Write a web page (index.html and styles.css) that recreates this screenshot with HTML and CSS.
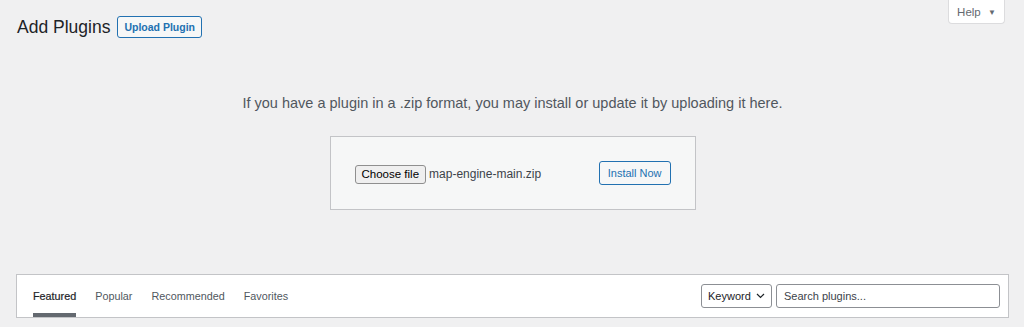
FILE: index.html
```html
<!DOCTYPE html>
<html lang="en">

<head>
  <meta charset="UTF-8" />
  <meta name="viewport" content="width=device-width, initial-scale=1.0" />
  <title>Add Plugins</title>
  <link rel="stylesheet" href="styles.css">
</head>

<body>
  <div class="page">
    <div class="top-row">
      <div class="title-group">
        <h1 class="page-title">Add Plugins</h1>
        <a class="btn-outline title-action" href="#">Upload Plugin</a>
      </div>
      <button class="help-tab">Help <span class="help-arrow">&#9660;</span></button>
    </div>

    <p class="upload-note">If you have a plugin in a .zip format, you may install or update it by uploading it here.</p>

    <form class="upload-box">
      <div class="file-field">
        <button type="button" class="file-btn">Choose file</button>
        <span class="file-name">map-engine-main.zip</span>
      </div>
      <button type="button" class="btn-outline install-btn">Install Now</button>
    </form>

    <div class="filter-bar">
      <ul class="filter-links">
        <li><a class="filter-link current" href="#">Featured</a></li>
        <li><a class="filter-link" href="#">Popular</a></li>
        <li><a class="filter-link" href="#">Recommended</a></li>
        <li><a class="filter-link" href="#">Favorites</a></li>
      </ul>
      <div class="search-form">
        <div class="select-box">Keyword
          <svg class="chevron" width="9" height="6" viewBox="0 0 9 6"><path d="M1 1l3.5 3.5L8 1" fill="none" stroke="#1d2327" stroke-width="1.2"/></svg>
        </div>
        <input class="search-input" type="search" placeholder="Search plugins...">
      </div>
    </div>
  </div>
</body>

</html>
```

FILE: styles.css
```css
:root {
  --color-bg: #f0f0f1;
  --color-text: #1d2327;
  --color-muted: #50575e;
  --color-border: #c3c4c7;
  --color-input-border: #8c8f94;
  --color-link: #2271b1;
  --font-base: "Liberation Sans", Arial, sans-serif;
}

* {
  box-sizing: border-box;
  margin: 0;
  padding: 0;
}

body {
  font-family: var(--font-base);
  background-color: var(--color-bg);
  color: var(--color-text);
  -webkit-font-smoothing: antialiased;
}

.page {
  padding: 0 15px 0 16px;
}

.top-row {
  display: flex;
  justify-content: space-between;
  align-items: flex-start;
}

.title-group {
  display: flex;
  align-items: center;
  gap: 7px;
  margin-top: 16px;
  margin-left: 1px;
}

.page-title {
  font-size: 17.5px;
  font-weight: 400;
  line-height: 22px;
}

.btn-outline {
  display: inline-block;
  border: 1px solid var(--color-link);
  border-radius: 3px;
  background-color: #f6f7f7;
  color: var(--color-link);
  font-family: inherit;
  text-decoration: none;
  cursor: pointer;
}

.title-action {
  font-size: 10.5px;
  font-weight: 700;
  line-height: 20px;
  padding: 0 6px;
}

.help-tab {
  width: 57px;
  height: 24px;
  margin-right: 4px;
  border: 1px solid #dcdcde;
  border-top: none;
  border-radius: 0 0 4px 4px;
  background-color: #fff;
  color: #646970;
  font-family: inherit;
  font-size: 11.5px;
}

.help-arrow {
  font-size: 8px;
  margin-left: 4px;
  vertical-align: 1px;
}

.upload-note {
  margin-top: 55px;
  text-align: center;
  color: var(--color-muted);
  font-size: 14.5px;
  line-height: 20px;
}

.upload-box {
  width: 366px;
  height: 74px;
  margin: 23px auto 0;
  padding: 0 24px 0 24px;
  display: flex;
  justify-content: space-between;
  align-items: center;
  border: 1px solid var(--color-border);
  background-color: #f6f7f7;
}

.file-field {
  display: flex;
  align-items: center;
  gap: 3px;
  margin-top: 2px;
}

.file-btn {
  height: 19px;
  padding: 0 6px;
  border: 1px solid #8f8f8f;
  border-radius: 3px;
  background-color: #efefef;
  color: #000;
  font-family: inherit;
  font-size: 11.5px;
}

.file-name {
  font-size: 12px;
  color: #3c434a;
}

.install-btn {
  height: 24px;
  padding: 0 8px;
  font-size: 11px;
}

.filter-bar {
  margin-top: 64px;
  height: 44px;
  display: flex;
  justify-content: space-between;
  align-items: stretch;
  border: 1px solid var(--color-border);
  background-color: #fff;
  padding: 0 8px 0 16px;
}

.filter-links {
  list-style: none;
  display: flex;
  gap: 19px;
}

.filter-links li {
  display: flex;
}

.filter-link {
  display: flex;
  align-items: center;
  padding-top: 4px;
  border-bottom: 4px solid transparent;
  color: var(--color-muted);
  font-size: 10.8px;
  text-decoration: none;
}

.filter-link.current {
  border-bottom-color: #646970;
  color: #1d2327;
  -webkit-text-stroke: 0.2px #1d2327;
}

.search-form {
  display: flex;
  align-items: center;
  gap: 4px;
}

.select-box {
  height: 24px;
  width: 71px;
  padding: 0 6px;
  display: flex;
  align-items: center;
  justify-content: space-between;
  border: 1px solid var(--color-input-border);
  border-radius: 3px;
  font-size: 11px;
  color: var(--color-text);
}

.search-input {
  width: 224px;
  height: 24px;
  padding: 0 7px;
  border: 1px solid var(--color-input-border);
  border-radius: 3px;
  font-family: inherit;
  font-size: 11px;
}

.search-input::placeholder {
  color: #3c434a;
}
```
